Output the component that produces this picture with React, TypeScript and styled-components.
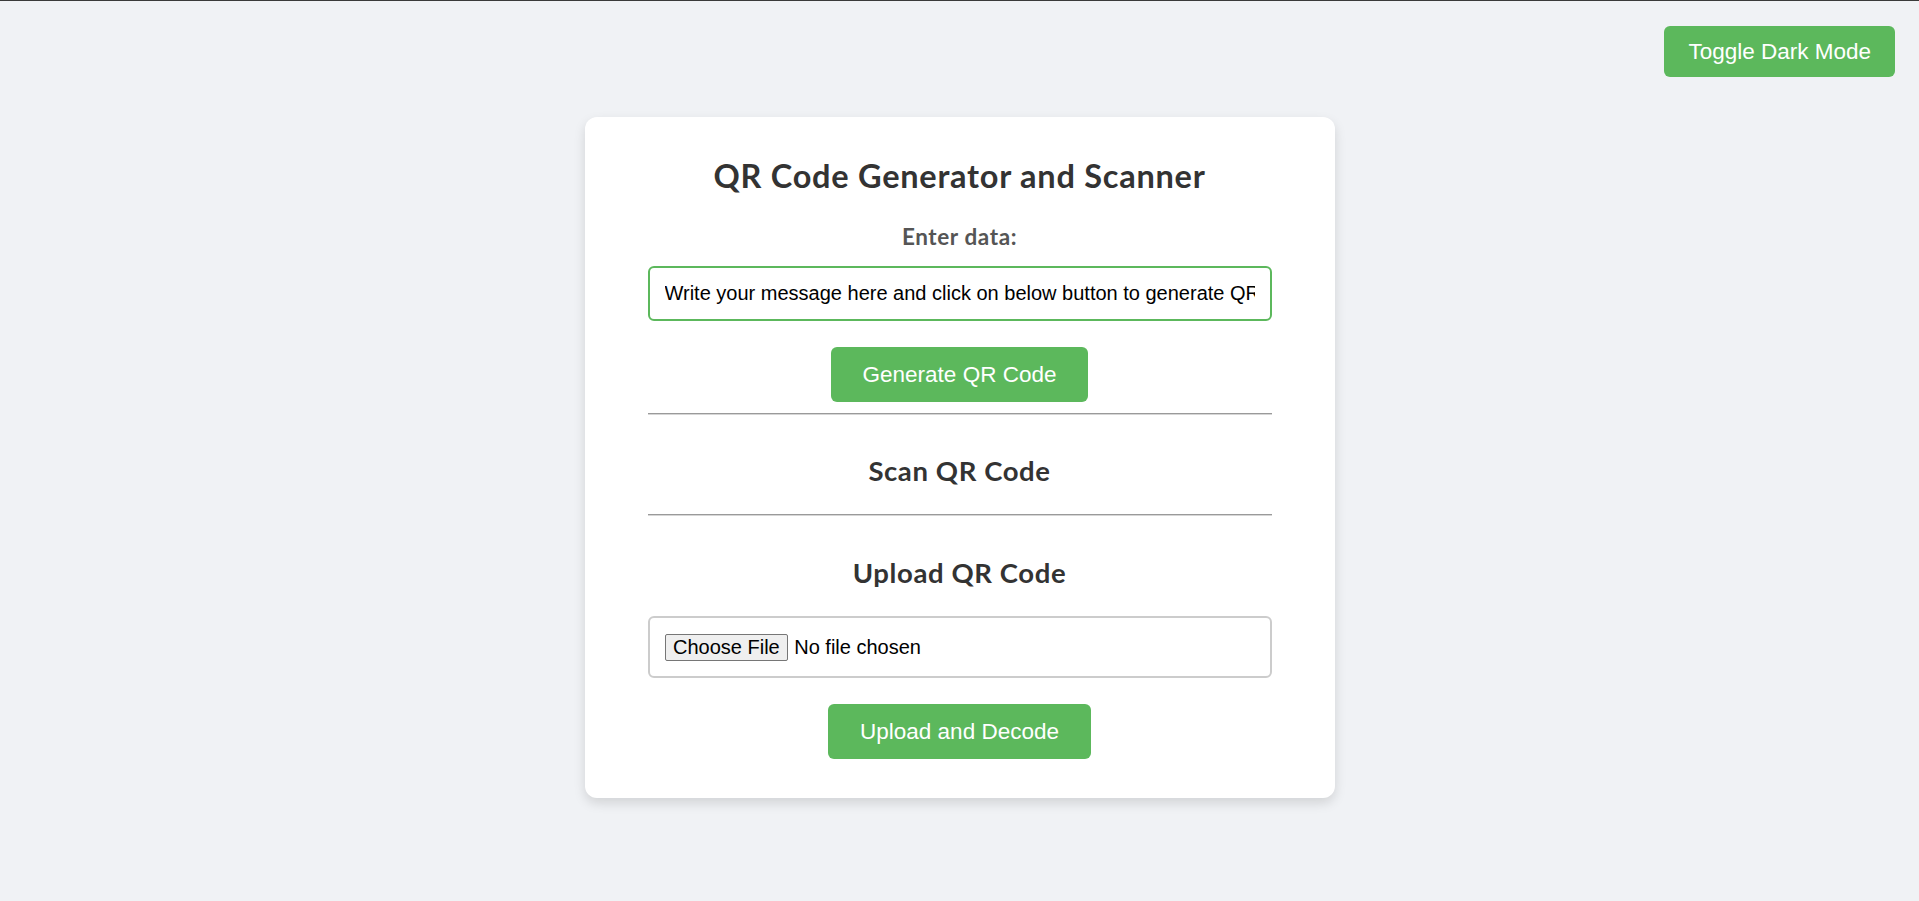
import styled, { createGlobalStyle } from "styled-components";

const GlobalStyle = createGlobalStyle`
  html, body {
    margin: 0;
    padding: 0;
  }
  body {
    background: #f0f2f5;
    border-top: 1px solid #3a3a3a;
    font-family: "Lato", "Liberation Sans", sans-serif;
    color: #333;
    min-height: 900px;
  }
`;

const Page = styled.div`
  display: flex;
  flex-direction: column;
  align-items: center;
`;

const TopBar = styled.div`
  align-self: stretch;
  display: flex;
  justify-content: flex-end;
  padding: 25px 24px 0;
`;

const GreenButton = styled.button<{ $h?: number; $px?: number }>`
  height: ${(p) => p.$h ?? 55}px;
  padding: 0 ${(p) => p.$px ?? 31.5}px;
  background: #5cb85c;
  color: #fff;
  border: none;
  border-radius: 6px;
  font-family: "Liberation Sans", Arial, sans-serif;
  font-size: 22.5px;
  cursor: pointer;
`;

const Card = styled.div`
  width: 750px;
  box-sizing: border-box;
  margin-top: 40px;
  padding: 39px 50px 39px;
  background: #fff;
  border-radius: 12px;
  box-shadow: 0 5px 12px rgba(0, 0, 0, 0.13);
  display: flex;
  flex-direction: column;
  align-items: center;
`;

const Title = styled.h1`
  margin: 0;
  font-size: 32.5px;
  line-height: 40px;
  font-weight: 700;
  letter-spacing: 0.75px;
  color: #333;
`;

const Label = styled.label`
  margin-top: 27px;
  font-size: 22.5px;
  line-height: 28px;
  font-weight: 700;
  letter-spacing: 0.6px;
  color: #555;
`;

const TextInput = styled.input`
  margin-top: 15px;
  width: 624px;
  height: 55px;
  box-sizing: border-box;
  padding: 0 15px;
  border: 2px solid #5cb85c;
  border-radius: 6px;
  outline: none;
  font-family: "Liberation Sans", Arial, sans-serif;
  font-size: 20px;
  color: #000;
`;

const Divider = styled.hr<{ $mt: number }>`
  margin: ${(p) => p.$mt}px 0 0;
  width: 624px;
  height: 0;
  border: none;
  border-top: 1px solid #9a9a9a;
  border-bottom: 1px solid #d6d6d6;
`;

const SectionTitle = styled.h2<{ $mt: number }>`
  margin: ${(p) => p.$mt}px 0 0;
  font-size: 27.5px;
  line-height: 34px;
  font-weight: 700;
  letter-spacing: 0.6px;
  color: #333;
`;

const FileInput = styled.input`
  margin-top: 26px;
  width: 624px;
  box-sizing: border-box;
  padding: 15px 15px 14px;
  border: 2px solid #ccc;
  border-radius: 6px;
  background: #fff;
  font-family: "Liberation Sans", Arial, sans-serif;
  font-size: 20px;
  line-height: 29px;
  color: #000;

  &::file-selector-button {
    font: inherit;
    line-height: 23px;
    padding: 1px 7.5px;
    margin-right: 6px;
    border: 1px solid #767676;
    border-radius: 2px;
    background: #efefef;
    color: #000;
  }
`;

const Spaced = styled.div<{ $mt: number }>`
  margin-top: ${(p) => p.$mt}px;
`;

export default function App() {
  return (
    <>
      <GlobalStyle />
      <Page>
        <TopBar>
          <GreenButton $h={51} $px={24}>
            Toggle Dark Mode
          </GreenButton>
        </TopBar>
        <Card>
          <Title>QR Code Generator and Scanner</Title>
          <Label htmlFor="qr-data">Enter data:</Label>
          <TextInput
            id="qr-data"
            type="text"
            defaultValue="Write your message here and click on below button to generate QR Code"
          />
          <Spaced $mt={26}>
            <GreenButton>Generate QR Code</GreenButton>
          </Spaced>
          <Divider $mt={11} />
          <SectionTitle $mt={39}>Scan QR Code</SectionTitle>
          <Divider $mt={26} />
          <SectionTitle $mt={40}>Upload QR Code</SectionTitle>
          <FileInput type="file" accept="image/*" />
          <Spaced $mt={26}>
            <GreenButton $px={32}>Upload and Decode</GreenButton>
          </Spaced>
        </Card>
      </Page>
    </>
  );
}
